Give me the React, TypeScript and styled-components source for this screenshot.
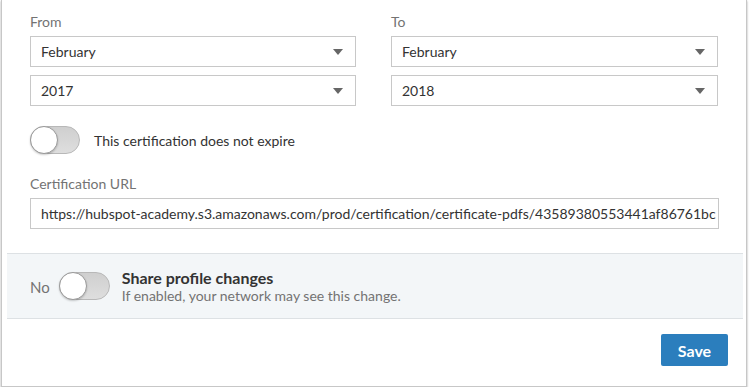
import styled, { createGlobalStyle } from "styled-components";

const GlobalStyle = createGlobalStyle`
  body {
    margin: 0;
    background: #ffffff;
    font-family: Lato, "Open Sans", sans-serif;
    color: #333333;
  }
`;

const Frame = styled.div`
  width: 744px;
  height: 386px;
  margin-left: 1px;
  background: #ffffff;
  border: 1px solid #c7c7c7;
  border-top: none;
  box-shadow: 0 1px 2px rgba(0, 0, 0, 0.35);
  display: flex;
  flex-direction: column;
`;

const Form = styled.div`
  padding: 13px 27px 0 28px;
`;

const Columns = styled.div`
  display: grid;
  grid-template-columns: 326px 327px;
  column-gap: 35px;
`;

const Field = styled.div`
  display: flex;
  flex-direction: column;
  gap: 8px;
`;

const Label = styled.div`
  font-size: 14px;
  line-height: 18px;
  color: #737373;
  margin-bottom: -3px;
`;

const SelectBox = styled.div`
  height: 29px;
  border: 1px solid #c8c8c8;
  display: flex;
  align-items: center;
  justify-content: space-between;
  padding: 0 12px 0 10px;
  font-size: 14px;
  color: #333333;
`;

const Caret = styled.span`
  width: 0;
  height: 0;
  border-left: 5px solid transparent;
  border-right: 5px solid transparent;
  border-top: 6px solid #666666;
`;

const ToggleRow = styled.div<{ $top?: number }>`
  display: flex;
  align-items: center;
  gap: 14px;
  margin-top: ${(p) => p.$top ?? 0}px;
`;

const Track = styled.div<{ $w: number }>`
  position: relative;
  width: ${(p) => p.$w}px;
  height: 28px;
  box-sizing: border-box;
  border-radius: 14px;
  background: linear-gradient(#cfcfcf, #dedede);
  border: 1px solid #b8b8b8;
  flex-shrink: 0;
`;

const Knob = styled.div`
  position: absolute;
  left: -1px;
  top: -1px;
  width: 28px;
  height: 28px;
  box-sizing: border-box;
  border-radius: 50%;
  background: #ffffff;
  border: 1px solid #9a9a9a;
  box-shadow: 0 1px 2px rgba(0, 0, 0, 0.2);
`;

const ToggleText = styled.span`
  font-size: 14px;
  color: #333333;
`;

const UrlField = styled(Field)`
  margin-top: 21px;
`;

const UrlInput = styled.div`
  height: 29px;
  border: 1px solid #c8c8c8;
  display: flex;
  align-items: center;
  padding: 0 10px;
  font-size: 14px;
  color: #333333;
  white-space: nowrap;
  overflow: hidden;
`;

const ShareBand = styled.div`
  margin: 24px 3px 0 5px;
  height: 64px;
  background: #f3f6f8;
  border-top: 1px solid #dde1e4;
  border-bottom: 1px solid #dde1e4;
  display: flex;
  align-items: center;
  padding-left: 23px;
  gap: 9px;
`;

const NoText = styled.span`
  font-size: 15px;
  color: #737373;
  margin-top: 1px;
`;

const ShareText = styled.div`
  display: flex;
  flex-direction: column;
  margin-left: 3px;
`;

const ShareTitle = styled.span`
  font-size: 16px;
  font-weight: 700;
  line-height: 19px;
  color: #333333;
`;

const ShareSub = styled.span`
  font-size: 14px;
  line-height: 18px;
  color: #737373;
`;

const Footer = styled.div`
  display: flex;
  justify-content: flex-end;
  padding: 15px 18px 0 0;
`;

const SaveButton = styled.button`
  width: 67px;
  height: 32px;
  border: none;
  border-radius: 2px;
  background: #2b7ebd;
  color: #ffffff;
  font-family: Lato, "Open Sans", sans-serif;
  font-size: 16px;
  font-weight: 700;
  cursor: pointer;
`;

const Select = ({ value }: { value: string }) => (
  <SelectBox>
    <span>{value}</span>
    <Caret />
  </SelectBox>
);

export default function App() {
  return (
    <>
      <GlobalStyle />
      <Frame>
        <Form>
          <Columns>
            <Field>
              <Label>From</Label>
              <Select value="February" />
              <Select value="2017" />
            </Field>
            <Field>
              <Label>To</Label>
              <Select value="February" />
              <Select value="2018" />
            </Field>
          </Columns>
          <ToggleRow $top={20}>
            <Track $w={50}>
              <Knob />
            </Track>
            <ToggleText>This certification does not expire</ToggleText>
          </ToggleRow>
          <UrlField>
            <Label>Certification URL</Label>
            <UrlInput>
              https://hubspot-academy.s3.amazonaws.com/prod/certification/certificate-pdfs/43589380553441af86761bc
            </UrlInput>
          </UrlField>
        </Form>
        <ShareBand>
          <NoText>No</NoText>
          <Track $w={51}>
            <Knob />
          </Track>
          <ShareText>
            <ShareTitle>Share profile changes</ShareTitle>
            <ShareSub>If enabled, your network may see this change.</ShareSub>
          </ShareText>
        </ShareBand>
        <Footer>
          <SaveButton>Save</SaveButton>
        </Footer>
      </Frame>
    </>
  );
}
